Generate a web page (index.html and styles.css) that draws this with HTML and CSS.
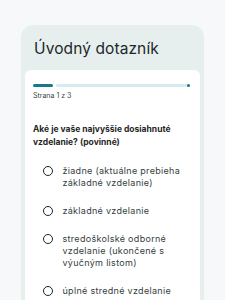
FILE: index.html
```html
<!DOCTYPE html>
<html lang="sk">
<head>
<meta charset="utf-8">
<link rel="stylesheet" href="styles.css">
</head>
<body>
<div class="page">
  <div class="card">
    <h1 class="title">Úvodný dotazník</h1>
    <div class="panel">
      <div class="progress">
        <div class="progress-fill"></div>
        <div class="progress-track"><span class="progress-dot"></span></div>
      </div>
      <div class="step">Strana 1 z 3</div>
      <div class="question">Aké je vaše najvyššie dosiahnuté vzdelanie? (povinné)</div>
      <ul class="options">
        <li class="option"><span class="radio"></span><span class="label">žiadne (aktuálne prebieha základné vzdelanie)</span></li>
        <li class="option"><span class="radio"></span><span class="label">základné vzdelanie</span></li>
        <li class="option"><span class="radio"></span><span class="label">stredoškolské odborné vzdelanie (ukončené s výučným listom)</span></li>
        <li class="option"><span class="radio"></span><span class="label">úplné stredné vzdelanie</span></li>
      </ul>
    </div>
  </div>
</div>
</body>
</html>
```
FILE: styles.css
```css
html, body {
  margin: 0;
  padding: 0;
  background: #f7f8fa;
  font-family: Inter, "Noto Sans", sans-serif;
  color: #1f2a2b;
  overflow: hidden;
}
.page {
  padding: 25px 21px 0 21px;
  height: 275px;
  overflow: hidden;
}
.card {
  background: #e7efee;
  border-radius: 12px 12px 0 0;
  padding: 0 4px;
}
.title {
  margin: 0;
  padding: 12px 0 0 9px;
  height: 33px;
  font-size: 15.5px;
  font-weight: 400;
  line-height: 24px;
  letter-spacing: 0.1px;
  color: #1c2828;
}
.panel {
  background: #ffffff;
  border-radius: 6px 6px 0 0;
  padding: 14px 10px 0 8px;
  height: 240px;
}
.progress {
  display: flex;
  align-items: center;
  gap: 3px;
  height: 3px;
}
.progress-fill {
  width: 20px;
  height: 3px;
  border-radius: 2px;
  background: #17798a;
}
.progress-track {
  flex: 1;
  height: 3px;
  border-radius: 2px;
  background: #d4ecef;
  position: relative;
}
.progress-dot {
  position: absolute;
  right: 0;
  top: 0;
  width: 3px;
  height: 3px;
  border-radius: 50%;
  background: #17798a;
}
.step {
  margin-top: 4px;
  font-size: 7px;
  line-height: 10px;
  color: #3c4646;
}
.question {
  margin-top: 22px;
  font-size: 8.5px;
  font-weight: 700;
  line-height: 12.5px;
  color: #1f2727;
}
.options {
  list-style: none;
  margin: 17px 0 0 0;
  padding: 0;
}
.option {
  display: flex;
  align-items: flex-start;
  gap: 10px;
  padding-left: 9.5px;
  margin-bottom: 16px;
}
.radio {
  flex: none;
  width: 8px;
  height: 8px;
  border: 1.5px solid #1e2626;
  border-radius: 50%;
  margin-top: 0.5px;
}
.label {
  font-size: 9px;
  line-height: 12px;
  letter-spacing: 0.3px;
  color: #353e3e;
}
```
